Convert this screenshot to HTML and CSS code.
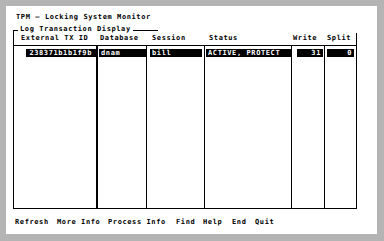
FILE: index.html
```html
<!DOCTYPE html>
<html>
<head>
<meta charset="utf-8">
<link rel="stylesheet" href="styles.css">
</head>
<body>
<div class="panel">
  <div class="title">TPM — Locking System Monitor</div>
  <div class="box">
    <div class="legend">
      <span class="tick"></span>
      <span class="legend-text">Log Transaction Display</span>
      <span class="rule"></span>
    </div>
    <div class="table">
      <div class="head">
        <div class="h h1">External TX ID</div>
        <div class="h h2">Database</div>
        <div class="h h3">Session</div>
        <div class="h h4">Status</div>
        <div class="h h5">Write</div>
        <div class="h h6">Split</div>
      </div>
      <div class="body">
        <div class="col c1"><div class="cell">238371b1b1f9b</div></div>
        <div class="col c2"><div class="cell">dnam</div></div>
        <div class="col c3"><div class="cell">bill</div></div>
        <div class="col c4"><div class="cell">ACTIVE, PROTECT</div></div>
        <div class="col c5"><div class="cell">31</div></div>
        <div class="col c6"><div class="cell">0</div></div>
      </div>
    </div>
  </div>
  <div class="footer">
    <span>Refresh</span>
    <span>More Info</span>
    <span>Process Info</span>
    <span>Find</span>
    <span>Help</span>
    <span>End</span>
    <span>Quit</span>
  </div>
</div>
</body>
</html>
```

FILE: styles.css
```css
* { box-sizing: border-box; }
html, body { margin: 0; padding: 0; }
body {
  background: #b4b4b4;
  width: 384px;
  height: 241px;
  overflow: hidden;
  font-family: "DejaVu Sans Mono", monospace;
  font-weight: bold;
  font-size: 7px;
  line-height: 7px;
  letter-spacing: 0.6px;
  color: #000;
}
.panel {
  margin: 6px 0 0 6px;
  width: 371px;
  height: 228px;
  background: #fff;
  padding-top: 8px;
}
.title {
  margin-left: 10px;
  height: 7px;
  white-space: nowrap;
}
.box {
  margin-top: 5px;
  margin-left: 7px;
  width: 344px;
}
.legend {
  display: flex;
  height: 7px;
}
.tick {
  width: 5px;
  margin-top: 4px;
  border-top: 1px solid #000;
  border-left: 1px solid #000;
}
.legend-text {
  margin-left: 2px;
  white-space: nowrap;
}
.rule {
  width: 25px;
  margin-left: 2px;
  margin-top: 4px;
  height: 0;
  border-top: 1px solid #000;
}
.table {
  border-left: 1px solid #000;
  border-right: 1px solid #000;
  border-bottom: 1px solid #000;
}
.head, .body {
  display: grid;
  grid-template-columns: 84px 49px 58px 87px 33px 31px;
}
.head {
  padding: 2px 0 3px;
  border-bottom: 1px solid #000;
  white-space: nowrap;
}
.h1 { padding-left: 7px; }
.h2 { padding-left: 2px; }
.h3 { padding-left: 5px; }
.h4 { padding-left: 4px; }
.h5 { padding-left: 1px; }
.h6 { padding-left: 2px; }
.body {
  height: 162px;
}
.col {
  border-right: 1px solid #000;
  padding-top: 3px;
}
.c1 { border-right-width: 2px; }
.c6 { border-right: none; }
.cell {
  background: #000;
  color: #fff;
  height: 8px;
  line-height: 8px;
  white-space: nowrap;
  overflow: hidden;
  padding-left: 2px;
}
.c1 .cell { margin-left: 12px; text-align: right; padding-right: 4px; }
.c2 .cell { margin-left: 1px; }
.c3 .cell { margin-left: 3px; margin-right: 2px; }
.c4 .cell { margin-left: 1px; }
.c5 .cell { margin-left: 5px; margin-right: 1px; text-align: right; padding-right: 2px; }
.c6 .cell { margin-left: 2px; margin-right: 2px; text-align: right; padding-right: 2px; }
.footer {
  margin-top: 10px;
  margin-left: 9px;
  display: grid;
  grid-template-columns: 42px 51px 68px 27px 29px 23px auto;
  white-space: nowrap;
}
```
